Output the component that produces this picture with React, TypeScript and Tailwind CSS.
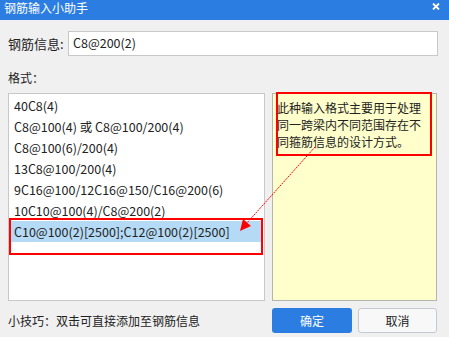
import React from "react";

const items = [
  "40C8(4)",
  "C8@100(4) 或 C8@100/200(4)",
  "C8@100(6)/200(4)",
  "13C8@100/200(4)",
  "9C16@100/12C16@150/C16@200(6)",
  "10C10@100(4)/C8@200(2)",
  "C10@100(2)[2500];C12@100(2)[2500]",
];

export default function App() {
  return (
    <div
      className="relative w-[449px] h-[337px] bg-[#f0f0f0] text-[#222] overflow-hidden flex flex-col"
      style={{ fontFamily: '"Microsoft YaHei", "Noto Sans CJK SC", "Noto Sans", sans-serif' }}
    >
      <div className="h-[20px] bg-[#2b7de1] text-white text-[12px] leading-[15px] pl-[4px] pr-[9px] flex justify-between items-start">
        <span>钢筋输入小助手</span>
        <svg width="8" height="7" viewBox="0 0 8 7" className="mt-[3px]">
          <path d="M1 0.5 L7 6.5 M7 0.5 L1 6.5" stroke="white" strokeWidth="1.8" />
        </svg>
      </div>
      <div className="flex-1 pl-[8px] pr-[12px] flex flex-col">
        <div className="mt-[11px] flex items-center h-[25px]">
          <span className="w-[60px] text-[13px]">钢筋信息:</span>
          <div className="flex-1 h-[25px] mr-[-1px] bg-white border border-[#c8c8c8] flex items-center pl-[4px] text-[12.5px]">
            C8@200(2)
          </div>
        </div>
        <div className="mt-[13px] text-[12px] leading-[17px]">格式：</div>
        <div className="mt-[7px] flex gap-[7px] h-[208px]">
          <div className="w-[257px] bg-white border border-[#c8c8c8] pt-[1px] text-[12.5px]">
            {items.map((t, i) => (
              <div
                key={i}
                className={
                  "h-[21px] leading-[21px] mx-[1px] pl-[4px] whitespace-nowrap " +
                  (i === 6 ? "bg-[#b5daf5]" : "")
                }
              >
                {t}
              </div>
            ))}
          </div>
          <div className="flex-1 bg-[#ffffcc] border border-[#b4b4b4] pl-[4px] pr-[14px] pt-[5px] text-[12px] leading-[17px] text-[#222]">
            此种输入格式主要用于处理同一跨梁内不同范围存在不同箍筋信息的设计方式。
          </div>
        </div>
        <div className="mt-[7px] flex items-center h-[25px]">
          <span className="flex-1 text-[12px]">小技巧：双击可直接添加至钢筋信息</span>
          <button className="w-[80px] h-[25px] rounded-[3px] bg-[#2b7de1] text-white text-[12px]">确定</button>
          <button className="ml-[6px] w-[79px] h-[25px] rounded-[3px] bg-[#f8f8f8] border border-[#c4c8d0] text-[12px] text-[#222]">
            取消
          </button>
        </div>
      </div>

      {/* annotations */}
      <div className="absolute left-[9px] top-[218px] w-[254px] h-[37px] border-2 border-[#ff0000]" />
      <div className="absolute left-[276px] top-[92px] w-[156px] h-[64px] border-2 border-[#ff0000]" />
      <svg className="absolute left-0 top-0" width="449" height="337">
        <line x1="315" y1="147" x2="246" y2="224" stroke="#ff0000" strokeWidth="1" strokeDasharray="2 1" />
        <polygon points="240,231 243,219 251,226" fill="#ff0000" />
      </svg>
    </div>
  );
}
